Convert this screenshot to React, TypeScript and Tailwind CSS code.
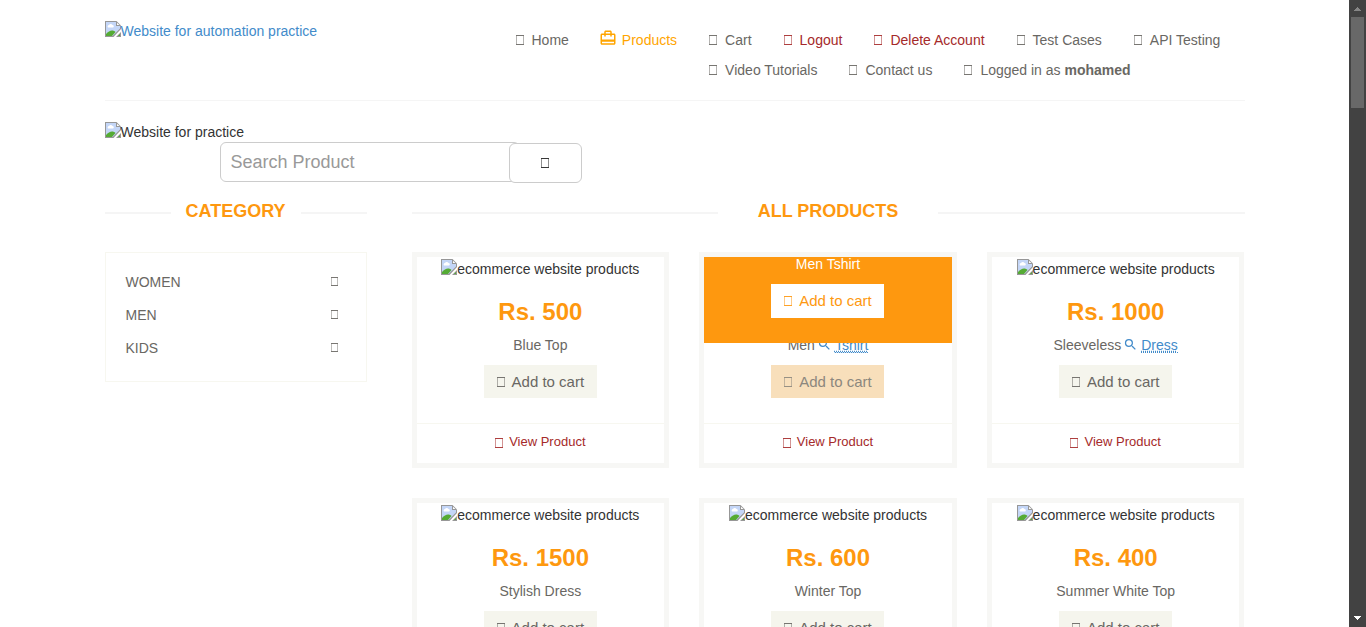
import type { ReactNode } from "react";
import { MdCardTravel, MdSearch } from "react-icons/md";

type Product = { price?: string; name: string; linked?: string; hovered?: boolean };

const products: Product[] = [
  { price: "Rs. 500", name: "Blue Top" },
  { name: "Men", linked: "Tshirt", hovered: true },
  { price: "Rs. 1000", name: "Sleeveless", linked: "Dress" },
  { price: "Rs. 1500", name: "Stylish Dress" },
  { price: "Rs. 600", name: "Winter Top" },
  { price: "Rs. 400", name: "Summer White Top" },
];

/* Hollow box shown for a glyph missing from the icon font. */
function Box({ className = "h-[10px] w-2" }: { className?: string }) {
  return (
    <svg viewBox="0 0 8 10" preserveAspectRatio="none" className={"shrink-0 " + className} aria-hidden="true">
      <path d="M0 0h8v1H0zM0 9h8v1H0z" fill="currentColor" fillOpacity=".9" />
      <path d="M0 1h1v8H0zM7 1h1v8H7z" fill="currentColor" fillOpacity=".5" />
    </svg>
  );
}

function BrokenImage({ alt }: { alt: string }) {
  return (
    <span className="flex items-start leading-5">
      <svg viewBox="0 0 16 16" className="size-4 shrink-0" aria-hidden="true">
        <path d="M0 0h11.500L16 4.500V8L8.500 16H0z" fill="#979797" />
        <path d="M1 1h10v4h4v2.500L7.500 15H1z" fill="#c4d6f7" />
        <path d="M12 1.700L14.500 4H12z" fill="#fff" />
        <path d="M3 6.500a1.500 1.500 0 0 1 1-2.500a2 2 0 0 1 3.500 0A1.300 1.300 0 0 1 8 6.500z" fill="#fff" />
        <path d="M1 15v-2c2-2 4-3.500 6-3.500 1.500 0 2.500.5 3.500 1.500L7 15z" fill="#55ab34" />
        <path d="M16 11v5h-5z" fill="#979797" />
        <path d="M15 13v2h-2z" fill="#55ab34" />
      </svg>
      <span>{alt}</span>
    </span>
  );
}

function NavItem({ children, danger = false }: { children: ReactNode; danger?: boolean }) {
  return (
    <li>
      <a href="#" className={"flex h-[30px] items-center gap-2 " + (danger ? "text-[#a52a2a]" : "text-[#696763]")}>
        <Box />
        <span>{children}</span>
      </a>
    </li>
  );
}

function Title({ children, pad }: { children: ReactNode; pad: string }) {
  return (
    <h2 className="mb-[31px] flex items-center text-lg leading-5 font-bold text-[#fe980f] uppercase">
      <span className="mt-[3px] h-0.5 flex-1 bg-[#f5f5f5]" />
      <span className={pad}>{children}</span>
      <span className="mt-[3px] h-0.5 flex-1 bg-[#f5f5f5]" />
    </h2>
  );
}

function CartButton({ tone }: { tone: string }) {
  return (
    <button type="button" className={"flex w-[113px] items-center justify-center gap-[7px] text-[15px] " + tone}>
      <Box className="h-[10px] w-2" />
      <span>Add to cart</span>
    </button>
  );
}

function Card({ product }: { product: Product }) {
  return (
    <article className="border-[5px] border-[#f7f7f5]">
      <div className="flex flex-col items-center pb-[25px]">
        {product.hovered ? (
          <div className="relative z-10 flex h-[86px] w-full flex-col items-center bg-[#fe980f] text-white">
            <p className="mb-3 leading-[15px]">Men Tshirt</p>
            <CartButton tone="h-[34px] bg-white text-[#fe980f]" />
          </div>
        ) : (
          <>
            <div className="mt-0.5 text-[#333]">
              <BrokenImage alt="ecommerce website products" />
            </div>
            <h3 className="mt-5 text-2xl leading-[26px] font-bold text-[#fe980f]">{product.price}</h3>
          </>
        )}
        <p className={"mb-[10px] flex items-center leading-5 " + (product.hovered ? "-mt-2" : "mt-[10px]")}>
          {product.name}
          {product.linked && (
            <a href="#" className="ml-0.5 flex items-center gap-[3px] text-[#428bca]">
              <MdSearch className="mb-0.5 size-[15px]" />
              <span className="border-b border-dotted border-[#428bca] leading-[14px] underline decoration-dotted">{product.linked}</span>
            </a>
          )}
        </p>
        <CartButton tone={product.hovered ? "h-[33px] bg-[#f8dfbb] text-[#8c877e]" : "h-[33px] bg-[#f5f5ed] text-[#696763]"} />
      </div>
      <a href="#" className="flex h-10 items-center justify-center gap-1.5 border-t border-[#f7f7f0] pb-0.5 text-[13px] text-[#a52a2a]">
        <Box />
        <span>View Product</span>
      </a>
    </article>
  );
}

export default function App() {
  return (
    <div className="flex h-screen overflow-hidden bg-white font-['Liberation_Sans',Arial,sans-serif] text-sm text-[#696763]">
      <div className="min-w-0 flex-1 overflow-hidden">
        <div className="mx-auto max-w-[1140px]">
          <header className="flex items-start justify-between border-b border-[#f5f5f5] pt-[21px] pb-[15px]">
            <a href="#" className="shrink-0 text-[#428bca]">
              <BrokenImage alt="Website for automation practice" />
            </a>
            <nav className="mt-1 w-[729px]">
              <ul className="flex items-start">
                <NavItem>Home</NavItem>
                <li className="mr-8 ml-[30px]">
                  <a href="#" className="flex h-[30px] items-center gap-[5px] text-[#ffa500]">
                    <MdCardTravel className="mb-1 size-[18px]" />
                    <span>Products</span>
                  </a>
                </li>
                <li className="flex-1">
                  <ul className="flex flex-wrap gap-x-[32px]">
                    <NavItem>Cart</NavItem>
                    <NavItem danger>Logout</NavItem>
                    <NavItem danger>Delete Account</NavItem>
                    <NavItem>Test Cases</NavItem>
                    <NavItem>API Testing</NavItem>
                    <NavItem>Video Tutorials</NavItem>
                    <NavItem>Contact us</NavItem>
                    <NavItem>
                      Logged in as <b>mohamed</b>
                    </NavItem>
                  </ul>
                </li>
              </ul>
            </nav>
          </header>

          <section className="pt-[21px] text-[#333]">
            <BrokenImage alt="Website for practice" />
            <form className="ml-[115px] flex items-start" onSubmit={(e) => e.preventDefault()}>
              <input
                type="text"
                aria-label="Search Product"
                placeholder="Search Product"
                className="h-10 w-[300px] rounded-md border border-[#ccc] px-[10px] text-lg placeholder:text-[#999]"
              />
              <button
                type="submit"
                aria-label="Search"
                className="relative mt-px -ml-[11px] flex h-10 w-[73px] items-center justify-center rounded-md border border-[#ccc] bg-white text-[#222]"
              >
                <Box />
              </button>
            </form>
          </section>

          <div className="flex items-start gap-[45px] pt-[18px]">
            <aside className="w-[262px] shrink-0">
              <Title pad="px-[15px]">Category</Title>
              <ul className="border border-[#f7f7f0] pt-3 pr-7 pb-[17px] pl-5">
                {["WOMEN", "MEN", "KIDS"].map((name) => (
                  <li key={name}>
                    <a href="#" className="flex h-[33px] items-center justify-between">
                      {name}
                      <Box className="h-[9px] w-[7px]" />
                    </a>
                  </li>
                ))}
              </ul>
            </aside>
            <main className="min-w-0 flex-1">
              <Title pad="px-10">All Products</Title>
              <div className="grid grid-cols-3 gap-[30px]">
                {products.map((p) => (
                  <Card key={p.name} product={p} />
                ))}
              </div>
            </main>
          </div>
        </div>
      </div>

      <div className="flex w-[17px] shrink-0 flex-col items-center bg-[#424242]" aria-hidden="true">
        <svg viewBox="0 0 17 17" className="size-[17px]">
          <path d="M8 7h1v1h1v1h1v1h1v1H5v-1h1V9h1V8h1z" fill="#868686" />
        </svg>
        <div className="h-[91px] w-[13px] bg-[#686868]" />
        <svg viewBox="0 0 17 17" className="mt-auto size-[17px]">
          <path d="M5 6h7v1h-1v1h-1v1H9v1H8V9H7V8H6V7H5z" fill="#fff" />
        </svg>
      </div>
    </div>
  );
}
